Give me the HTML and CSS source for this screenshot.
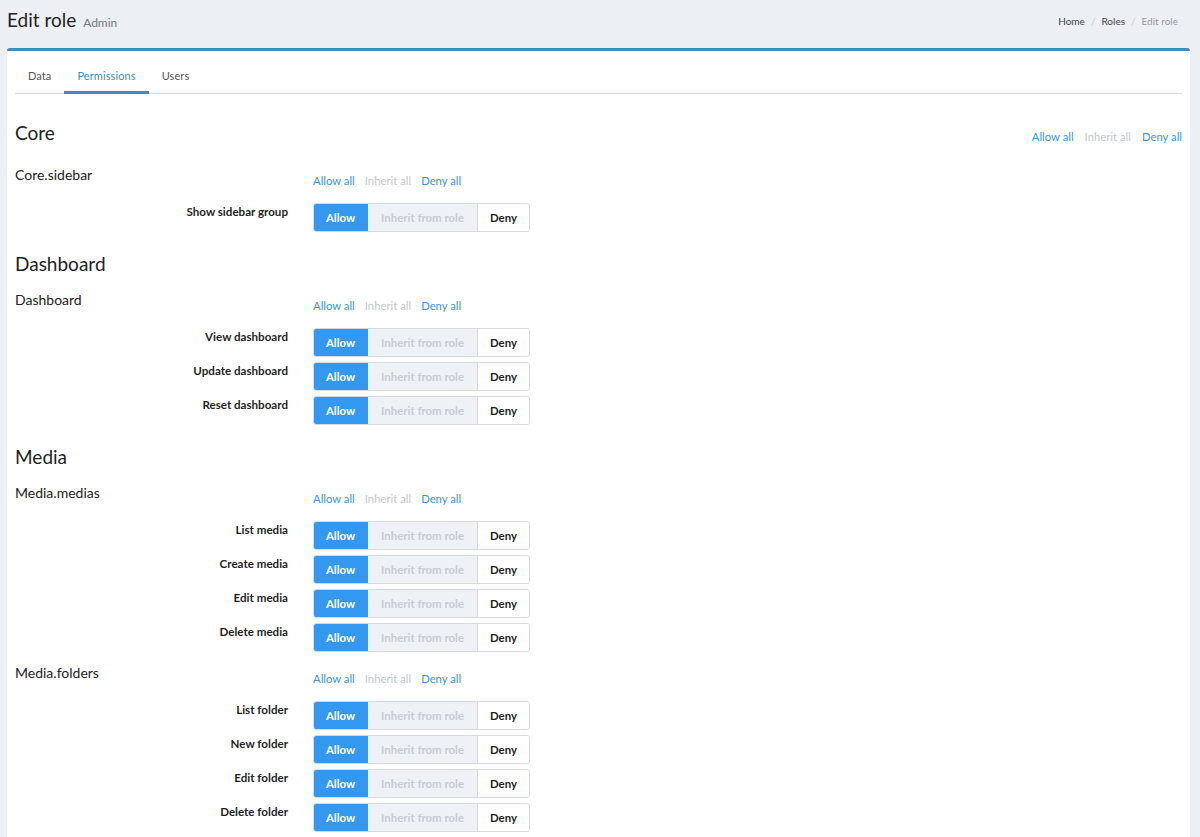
FILE: index.html
```html
<!DOCTYPE html>
<html lang="en">
<head>
<meta charset="utf-8">
<title>Edit role</title>
<link rel="stylesheet" href="styles.css">
</head>
<body>
<header class="page-header">
  <h1>Edit role <small>Admin</small></h1>
  <ol class="breadcrumb">
    <li><a href="#">Home</a></li>
    <li><a href="#">Roles</a></li>
    <li class="active">Edit role</li>
  </ol>
</header>

<section class="box">
  <nav class="tabs">
    <a href="#" class="tab">Data</a>
    <a href="#" class="tab active">Permissions</a>
    <a href="#" class="tab">Users</a>
  </nav>

  <div class="module">
    <div class="module-head with-bulk">
      <h2>Core</h2>
      <div class="bulk"><a class="allow">Allow all</a><a class="inherit">Inherit all</a><a class="deny">Deny all</a></div>
    </div>
    <div class="group">
      <div class="group-head">
        <h3>Core.sidebar</h3>
        <div class="bulk"><a class="allow">Allow all</a><a class="inherit">Inherit all</a><a class="deny">Deny all</a></div>
      </div>
      <div class="perm"><label>Show sidebar group</label><div class="switch"><span class="opt on">Allow</span><span class="opt mid">Inherit from role</span><span class="opt off">Deny</span></div></div>
    </div>
  </div>

  <div class="module">
    <div class="module-head"><h2>Dashboard</h2></div>
    <div class="group">
      <div class="group-head">
        <h3>Dashboard</h3>
        <div class="bulk"><a class="allow">Allow all</a><a class="inherit">Inherit all</a><a class="deny">Deny all</a></div>
      </div>
      <div class="perm"><label>View dashboard</label><div class="switch"><span class="opt on">Allow</span><span class="opt mid">Inherit from role</span><span class="opt off">Deny</span></div></div>
      <div class="perm"><label>Update dashboard</label><div class="switch"><span class="opt on">Allow</span><span class="opt mid">Inherit from role</span><span class="opt off">Deny</span></div></div>
      <div class="perm"><label>Reset dashboard</label><div class="switch"><span class="opt on">Allow</span><span class="opt mid">Inherit from role</span><span class="opt off">Deny</span></div></div>
    </div>
  </div>

  <div class="module">
    <div class="module-head"><h2>Media</h2></div>
    <div class="group">
      <div class="group-head">
        <h3>Media.medias</h3>
        <div class="bulk"><a class="allow">Allow all</a><a class="inherit">Inherit all</a><a class="deny">Deny all</a></div>
      </div>
      <div class="perm"><label>List media</label><div class="switch"><span class="opt on">Allow</span><span class="opt mid">Inherit from role</span><span class="opt off">Deny</span></div></div>
      <div class="perm"><label>Create media</label><div class="switch"><span class="opt on">Allow</span><span class="opt mid">Inherit from role</span><span class="opt off">Deny</span></div></div>
      <div class="perm"><label>Edit media</label><div class="switch"><span class="opt on">Allow</span><span class="opt mid">Inherit from role</span><span class="opt off">Deny</span></div></div>
      <div class="perm"><label>Delete media</label><div class="switch"><span class="opt on">Allow</span><span class="opt mid">Inherit from role</span><span class="opt off">Deny</span></div></div>
    </div>
    <div class="group">
      <div class="group-head">
        <h3>Media.folders</h3>
        <div class="bulk"><a class="allow">Allow all</a><a class="inherit">Inherit all</a><a class="deny">Deny all</a></div>
      </div>
      <div class="perm"><label>List folder</label><div class="switch"><span class="opt on">Allow</span><span class="opt mid">Inherit from role</span><span class="opt off">Deny</span></div></div>
      <div class="perm"><label>New folder</label><div class="switch"><span class="opt on">Allow</span><span class="opt mid">Inherit from role</span><span class="opt off">Deny</span></div></div>
      <div class="perm"><label>Edit folder</label><div class="switch"><span class="opt on">Allow</span><span class="opt mid">Inherit from role</span><span class="opt off">Deny</span></div></div>
      <div class="perm"><label>Delete folder</label><div class="switch"><span class="opt on">Allow</span><span class="opt mid">Inherit from role</span><span class="opt off">Deny</span></div></div>
    </div>
  </div>
</section>
</body>
</html>
```

FILE: styles.css
```css
* { box-sizing: border-box; }

html, body {
  margin: 0;
  padding: 0;
  background: #ecf0f5;
  font-family: "Lato", "Liberation Sans", sans-serif;
  color: #222;
}

a { text-decoration: none; cursor: pointer; }

/* title bar above the box */
.page-header {
  display: flex;
  justify-content: space-between;
  align-items: flex-start;
  height: 48px;
  padding: 0 22px 0 7px;
}

.page-header h1 {
  margin: 7px 0 0;
  font-size: 19px;
  font-weight: 400;
  line-height: 26px;
  color: #222;
}

.page-header h1 small {
  font-size: 12px;
  color: #777;
  margin-left: 2px;
}

.breadcrumb {
  list-style: none;
  display: flex;
  margin: 14px 0 0;
  padding: 0;
  font-size: 10px;
  line-height: 14px;
}

.breadcrumb li + li::before {
  content: "/";
  color: #ccc;
  padding: 0 6px;
}

.breadcrumb a { color: #444; }
.breadcrumb .active { color: #999; }

/* main box */
.box {
  margin: 0 10px 0 7px;
  background: #fff;
  border-top: 3px solid #3c8dbc;
  border-radius: 3px 3px 0 0;
  padding: 0 8px;
  min-height: 800px;
}

.tabs {
  display: flex;
  margin-top: 9px;
  border-bottom: 1px solid #ddd;
  height: 34px;
}

.tab {
  font-size: 11px;
  letter-spacing: 0.1px;
  color: #555;
  padding: 0 13px;
  line-height: 31px;
  border-bottom: 3px solid transparent;
  height: 34px;
}

.tab.active {
  color: #3c8dbc;
  border-bottom-color: #3c8dbc;
}

/* module heading (Core, Dashboard, Media) */
.module-head {
  display: flex;
  justify-content: space-between;
  align-items: center;
  margin-top: 19px;
  margin-bottom: 2px;
}

.module:first-of-type .module-head { margin-top: 26px; }
.module-head.with-bulk { margin-bottom: 8px; }

.module-head h2 {
  margin: 0;
  font-size: 19px;
  font-weight: 400;
  line-height: 26px;
}

.module-head .bulk { margin-top: 7px; gap: 11px; margin-right: 0; }

.bulk {
  display: flex;
  gap: 10px;
  font-size: 11.3px;
  line-height: 14px;
}

.bulk .allow, .bulk .deny { color: #3c94e0; }
.bulk .inherit { color: #c2c7cf; }

/* permission group */
.group-head {
  display: flex;
  align-items: flex-start;
  padding-top: 12px;
  margin-bottom: 15px;
}

.group-head h3 {
  margin: 0;
  width: 298px;
  font-size: 14px;
  font-weight: 400;
  line-height: 18px;
}

.group-head .bulk { margin-top: 8px; }

.perm {
  display: flex;
  align-items: flex-start;
  margin-bottom: 5px;
}

.perm:last-child { margin-bottom: 0; }

.perm label {
  width: 273px;
  margin-right: 25px;
  text-align: right;
  font-size: 11.6px;
  font-weight: 700;
  line-height: 16px;
  padding-top: 1px;
  color: #1f1f1f;
}

/* three-state toggle */
.switch {
  display: flex;
  height: 29px;
  border-radius: 3px;
  overflow: hidden;
  border: 1px solid #d6dae0;
}

.opt {
  display: flex;
  align-items: center;
  justify-content: center;
  font-size: 11.4px;
  font-weight: 700;
}

.opt.on {
  width: 55px;
  background: #3399f0;
  color: #fff;
  margin: -1px 0 -1px -1px;
}

.opt.mid {
  width: 110px;
  background: #eef1f6;
  color: #c6ccd6;
  border-right: 1px solid #d6dae0;
}

.opt.off {
  width: 51px;
  background: #fff;
  color: #222;
}
```
